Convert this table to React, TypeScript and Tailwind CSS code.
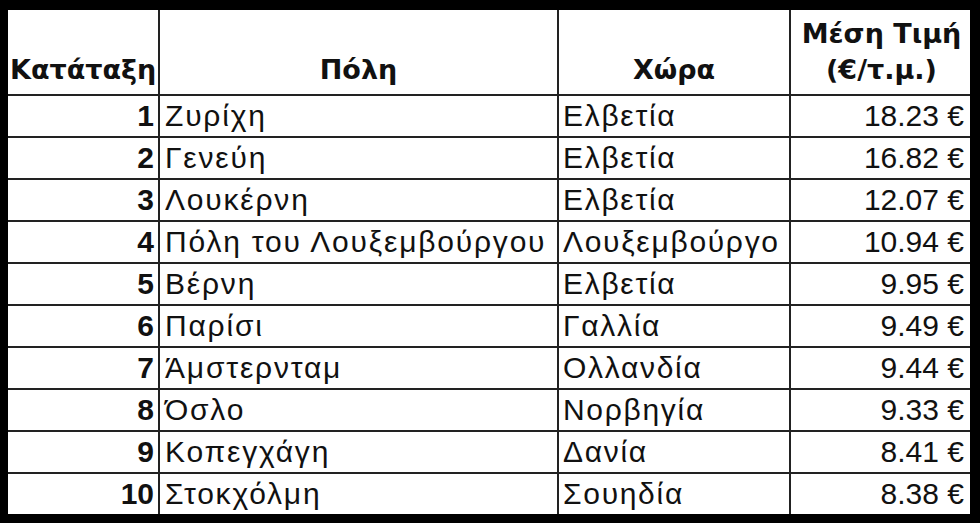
import React from 'react';

const ROWS = [
  { rank: 1, city: 'Ζυρίχη', country: 'Ελβετία', price: '18.23 €' },
  { rank: 2, city: 'Γενεύη', country: 'Ελβετία', price: '16.82 €' },
  { rank: 3, city: 'Λουκέρνη', country: 'Ελβετία', price: '12.07 €' },
  { rank: 4, city: 'Πόλη του Λουξεμβούργου', country: 'Λουξεμβούργο', price: '10.94 €' },
  { rank: 5, city: 'Βέρνη', country: 'Ελβετία', price: '9.95 €' },
  { rank: 6, city: 'Παρίσι', country: 'Γαλλία', price: '9.49 €' },
  { rank: 7, city: 'Άμστερνταμ', country: 'Ολλανδία', price: '9.44 €' },
  { rank: 8, city: 'Όσλο', country: 'Νορβηγία', price: '9.33 €' },
  { rank: 9, city: 'Κοπεγχάγη', country: 'Δανία', price: '8.41 €' },
  { rank: 10, city: 'Στοκχόλμη', country: 'Σουηδία', price: '8.38 €' },
];

const headText = "bg-white pb-[6px] font-['DejaVu_Sans',sans-serif] text-[27px] leading-[36px] font-bold text-[#111] whitespace-nowrap overflow-hidden";
const dataCell = 'bg-white h-[40px] text-[30px] leading-[40px] text-[#111] whitespace-nowrap overflow-hidden';

const App: React.FC = () => {
  return (
    <div className="w-[980px] h-[523px] bg-black pt-[10px] pl-[8px] pr-[10px] pb-[9px] font-['Liberation_Sans',Arial,sans-serif]">
      <div className="grid grid-cols-[150px_397px_230px_179px] grid-rows-[84px_repeat(10,40px)] gap-[2px] bg-[#222]">
        {/* HEADER */}
        <div className={`${headText} flex items-end justify-start pl-[2px]`}>Κατάταξη</div>
        <div className={`${headText} flex items-end justify-center`}>Πόλη</div>
        <div className={`${headText} flex items-end justify-center`}>Χώρα</div>
        <div className={`${headText} flex flex-col justify-end items-center pl-[2px]`}>
          <span>Μέση Τιμή</span>
          <span>(€/τ.μ.)</span>
        </div>

        {/* DATA ROWS */}
        {ROWS.map((r) => (
          <React.Fragment key={r.rank}>
            <div className={`${dataCell} text-right pr-[4px] font-bold`}>{r.rank}</div>
            <div className={`${dataCell} pl-[5px] tracking-[1.8px]`}>{r.city}</div>
            <div className={`${dataCell} pl-[4px] tracking-[1.7px]`}>{r.country}</div>
            <div className={`${dataCell} text-right pr-[6px]`}>{r.price}</div>
          </React.Fragment>
        ))}
      </div>
    </div>
  );
};

export default App;
